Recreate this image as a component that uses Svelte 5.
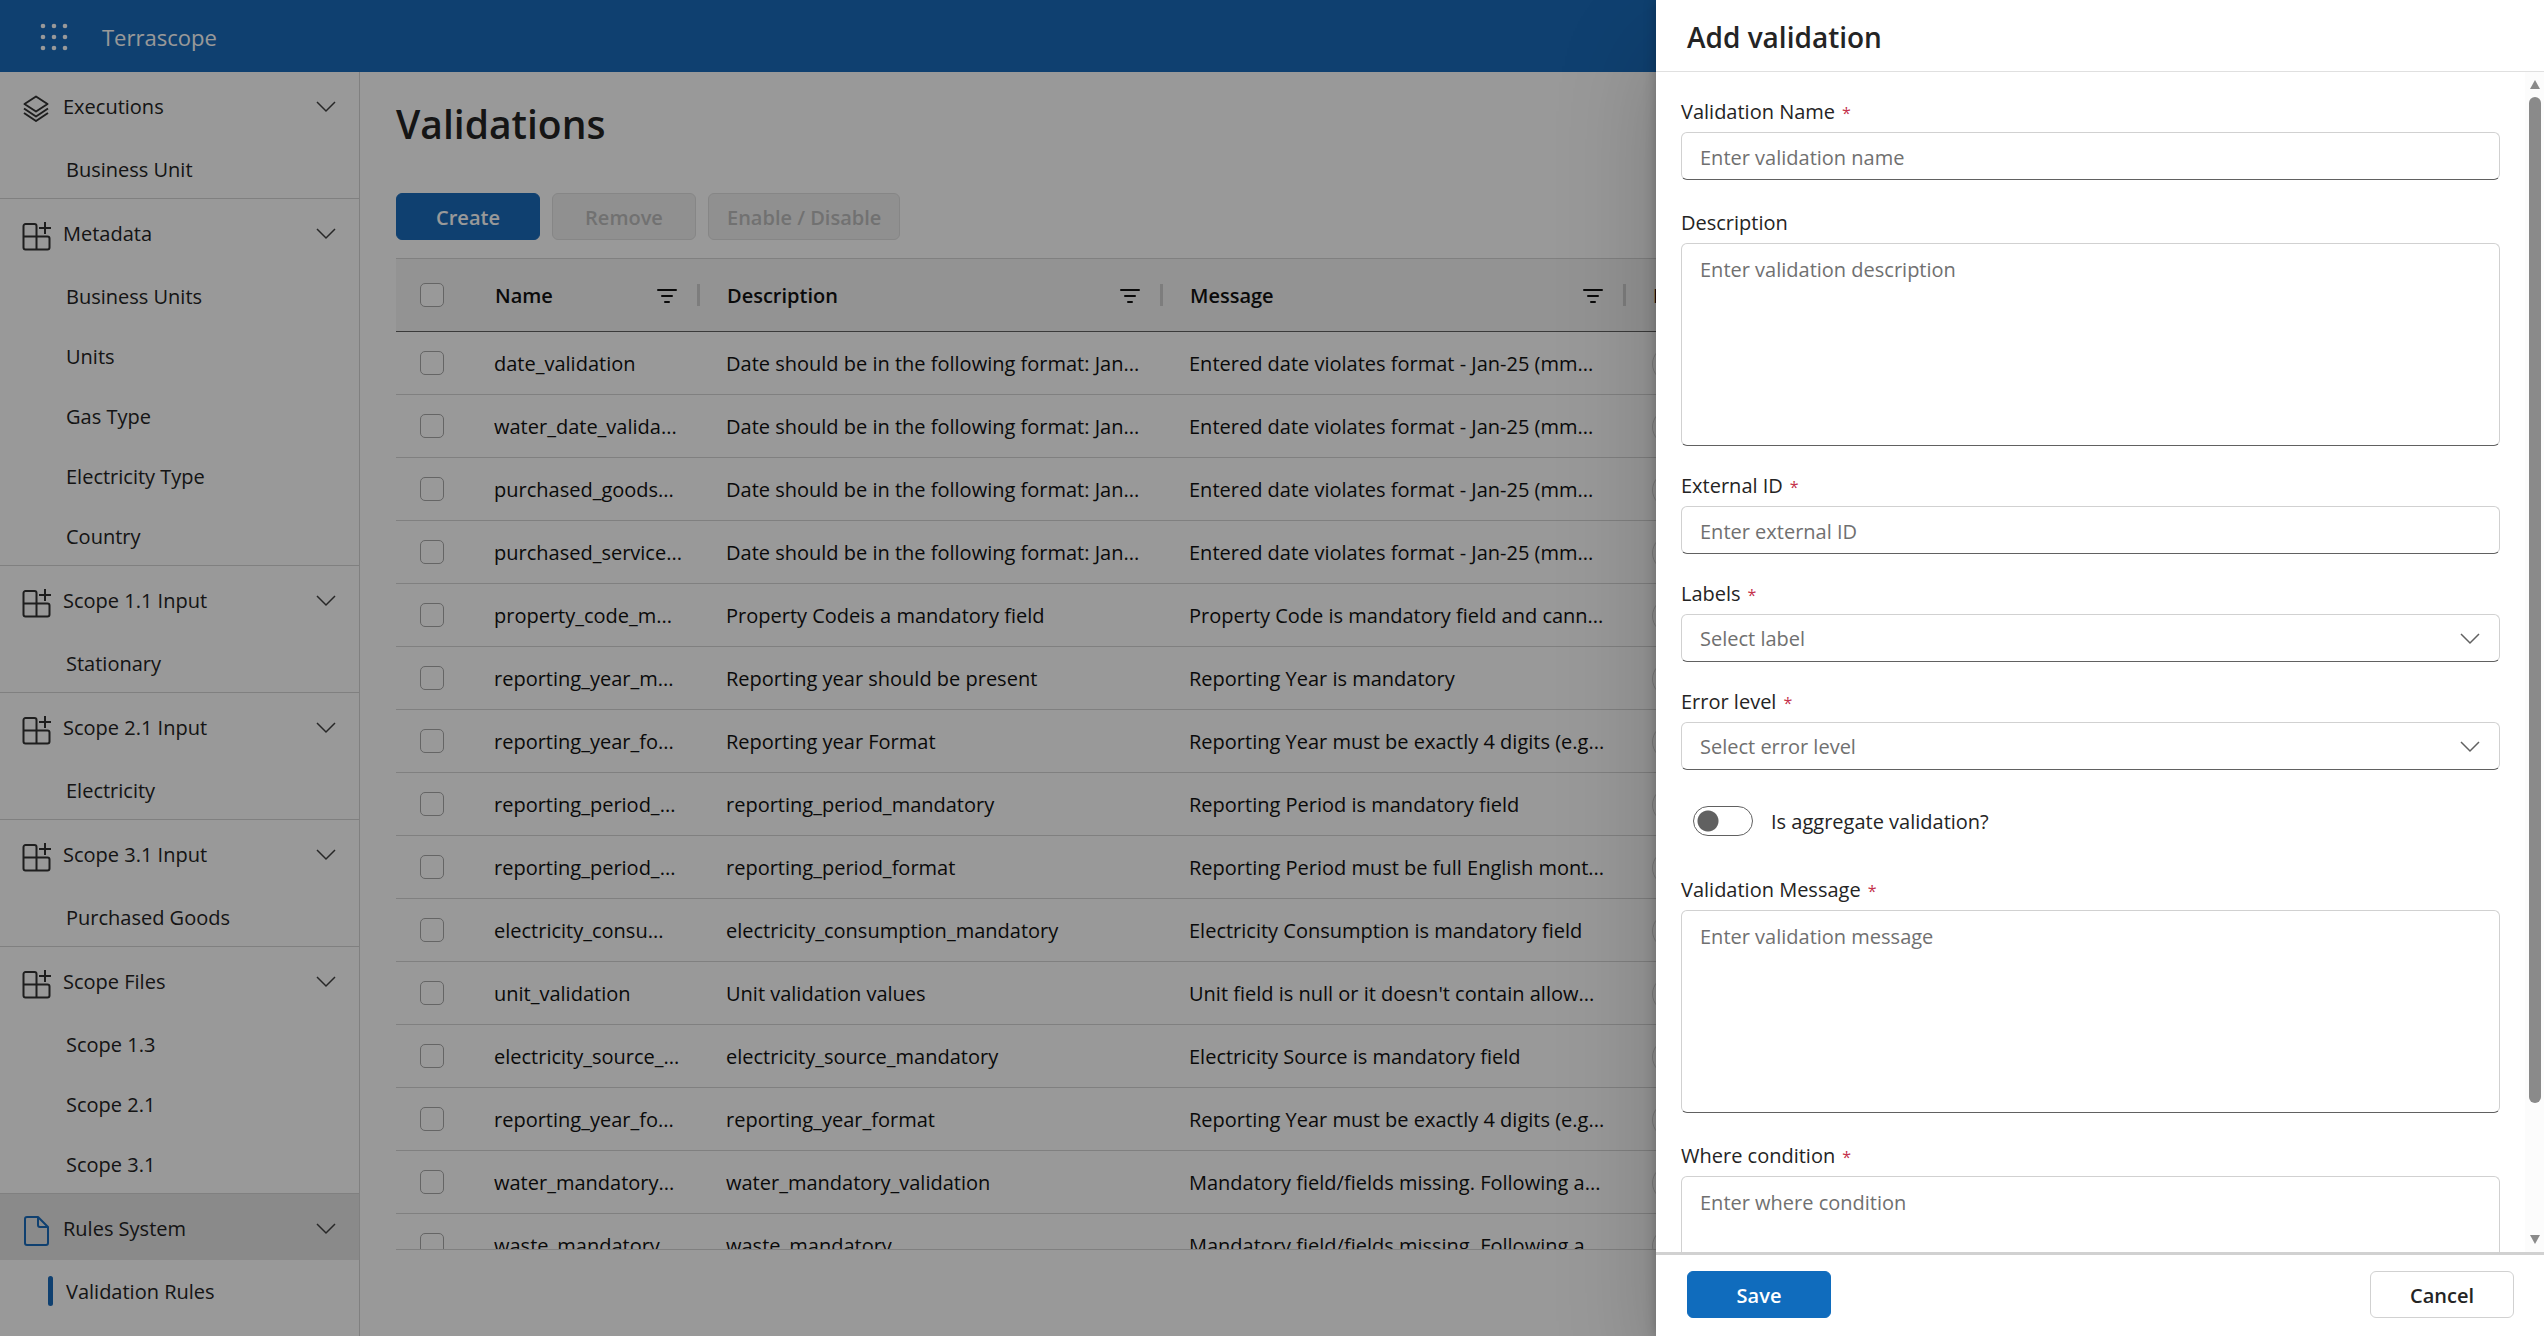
<script lang="ts">
  const groups = [
    { title: 'Executions', icon: 'layers', items: ['Business Unit'] },
    { title: 'Metadata', icon: 'apps', items: ['Business Units', 'Units', 'Gas Type', 'Electricity Type', 'Country'] },
    { title: 'Scope 1.1 Input', icon: 'apps', items: ['Stationary'] },
    { title: 'Scope 2.1 Input', icon: 'apps', items: ['Electricity'] },
    { title: 'Scope 3.1 Input', icon: 'apps', items: ['Purchased Goods'] },
    { title: 'Scope Files', icon: 'apps', items: ['Scope 1.3', 'Scope 2.1', 'Scope 3.1'] },
    { title: 'Rules System', icon: 'doc', items: ['Validation Rules'] },
  ];
  const activeGroup = 'Rules System';
  const activeItem = 'Validation Rules';

  const dateText = 'Date should be in the following format: Jan...';
  const dateMessage = 'Entered date violates format - Jan-25 (mm...';
  const rows = [
    ['date_validation', dateText, dateMessage],
    ['water_date_valida...', dateText, dateMessage],
    ['purchased_goods...', dateText, dateMessage],
    ['purchased_service...', dateText, dateMessage],
    ['property_code_m...', 'Property Codeis a mandatory field', 'Property Code is mandatory field and cann...'],
    ['reporting_year_m...', 'Reporting year should be present', 'Reporting Year is mandatory'],
    ['reporting_year_fo...', 'Reporting year Format', 'Reporting Year must be exactly 4 digits (e.g...'],
    ['reporting_period_...', 'reporting_period_mandatory', 'Reporting Period is mandatory field'],
    ['reporting_period_...', 'reporting_period_format', 'Reporting Period must be full English mont...'],
    ['electricity_consu...', 'electricity_consumption_mandatory', 'Electricity Consumption is mandatory field'],
    ['unit_validation', 'Unit validation values', "Unit field is null or it doesn't contain allow..."],
    ['electricity_source_...', 'electricity_source_mandatory', 'Electricity Source is mandatory field'],
    ['reporting_year_fo...', 'reporting_year_format', 'Reporting Year must be exactly 4 digits (e.g...'],
    ['water_mandatory...', 'water_mandatory_validation', 'Mandatory field/fields missing. Following a...'],
    ['waste_mandatory', 'waste_mandatory', 'Mandatory field/fields missing. Following a...'],
  ];

  const fields = [
    { id: 'name', label: 'Validation Name', kind: 'input', hint: 'Enter validation name', required: true },
    { id: 'description', label: 'Description', kind: 'textarea', hint: 'Enter validation description', required: false },
    { id: 'external', label: 'External ID', kind: 'input', hint: 'Enter external ID', required: true },
    { id: 'labels', label: 'Labels', kind: 'select', hint: 'Select label', required: true },
    { id: 'level', label: 'Error level', kind: 'select', hint: 'Select error level', required: true },
    { id: 'aggregate', label: 'Is aggregate validation?', kind: 'switch', hint: '', required: false },
    { id: 'message', label: 'Validation Message', kind: 'textarea', hint: 'Enter validation message', required: true },
    { id: 'where', label: 'Where condition', kind: 'textarea', hint: 'Enter where condition', required: true },
  ];
</script>

{#snippet chevron()}
  <svg class="chevron" viewBox="0 0 20 12" aria-hidden="true"><path d="M1 1l9 9 9-9" /></svg>
{/snippet}

{#snippet filterIcon()}
  <svg class="filter" viewBox="0 0 22 16" aria-hidden="true"><path d="M2 2h18M6 8h10M9 14h4" /></svg>
{/snippet}

<div class="app">
  <header class="topbar">
    <button class="launcher" aria-label="App launcher">
      <svg viewBox="0 0 28 28" aria-hidden="true">
        {#each [3, 14, 25] as y}
          {#each [3, 14, 25] as x}
            <circle cx={x} cy={y} r="2.3" />
          {/each}
        {/each}
      </svg>
    </button>
    <span class="brand">Terrascope</span>
  </header>

  <div class="body">
    <nav class="sidebar">
      {#each groups as group}
        <section class="group">
          <button class="group-head" class:active={group.title === activeGroup}>
            {#if group.icon === 'layers'}
              <svg class="nav-icon" viewBox="0 0 30 30" aria-hidden="true">
                <path d="M15 2.500l11.500 7.500L15 17.500 3.500 10z" />
                <path d="M3 14.500l12 8 12-8M3 19l12 8 12-8" />
              </svg>
            {:else if group.icon === 'apps'}
              <svg class="nav-icon" viewBox="0 0 30 30" aria-hidden="true">
                <path d="M15.500 15.500V5a2 2 0 0 0-2-2h-9a2 2 0 0 0-2 2v21.500a2 2 0 0 0 2 2h22a2 2 0 0 0 2-2v-9a2 2 0 0 0-2-2h-24M15.500 15.500v13M24 1v12M18 7h12" />
              </svg>
            {:else}
              <svg class="nav-icon blue" viewBox="0 0 30 30" aria-hidden="true">
                <path d="M17 1H6a2 2 0 0 0-2 2v24a2 2 0 0 0 2 2h19a2 2 0 0 0 2-2V11zM17 1v8a2 2 0 0 0 2 2h8" />
              </svg>
            {/if}
            <span>{group.title}</span>
            {@render chevron()}
          </button>
          {#each group.items as item}
            <a class="item" class:current={item === activeItem} href="#top">{item}</a>
          {/each}
        </section>
      {/each}
    </nav>

    <main>
      <h1>Validations</h1>
      <div class="toolbar">
        <button class="btn primary">Create</button>
        <button class="btn" disabled>Remove</button>
        <button class="btn" disabled>Enable / Disable</button>
      </div>
      <div class="grid">
        <table>
          <colgroup><col class="c-check" /><col class="c-name" /><col class="c-text" /><col class="c-text" /><col /></colgroup>
          <thead>
            <tr>
              <th><input type="checkbox" aria-label="Select all" /></th>
              {#each ['Name', 'Description', 'Message'] as title}
                <th><div class="th"><span>{title}</span>{@render filterIcon()}</div></th>
              {/each}
              <th><div class="th"><span>Level</span></div></th>
            </tr>
          </thead>
          <tbody>
            {#each rows as row}
              <tr>
                <td><input type="checkbox" aria-label="Select {row[0]}" /></td>
                {#each row as cell}
                  <td>{cell}</td>
                {/each}
                <td><span class="pill"></span></td>
              </tr>
            {/each}
          </tbody>
        </table>
      </div>
    </main>
  </div>

  <div class="overlay"></div>

  <div class="drawer" role="dialog" aria-labelledby="drawer-title">
    <h2 id="drawer-title">Add validation</h2>
    <div class="drawer-body">
      <form>
        {#each fields as field}
          {#if field.kind === 'switch'}
            <div class="switch">
              <input type="checkbox" role="switch" aria-checked="false" id={field.id} />
              <label for={field.id}>{field.label}</label>
            </div>
          {:else}
            <div class="field {field.kind}">
              <label for={field.id}>{field.label}{#if field.required}<span class="req">*</span>{/if}</label>
              {#if field.kind === 'input'}
                <input type="text" id={field.id} placeholder={field.hint} />
              {:else if field.kind === 'textarea'}
                <textarea id={field.id} placeholder={field.hint}></textarea>
              {:else}
                <div class="select-wrap">
                  <select id={field.id}><option>{field.hint}</option></select>
                  {@render chevron()}
                </div>
              {/if}
            </div>
          {/if}
        {/each}
      </form>
      <div class="scrollbar" aria-hidden="true">
        <svg viewBox="0 0 10 9"><path d="M5 0l5 9H0z" /></svg>
        <div class="track"><div class="thumb"></div></div>
        <svg viewBox="0 0 10 9"><path d="M0 0h10L5 9z" /></svg>
      </div>
    </div>
    <footer>
      <button class="btn primary">Save</button>
      <button class="btn">Cancel</button>
    </footer>
  </div>
</div>

<style>
  :global(body) { margin: 0; }
  .app { position: relative; display: flex; flex-direction: column; height: 100vh; overflow: hidden; background: #fff; color: #242424; font: 20px/28px "Segoe UI", "Open Sans", "Noto Sans", sans-serif; }
  .app * { box-sizing: border-box; }
  button, input, textarea, select { font: inherit; color: inherit; margin: 0; }
  svg { flex: none; }

  .topbar { display: flex; align-items: center; gap: 34px; height: 72px; flex: none; padding: 2px 40px 0; background: #1a6bbb; color: #fff; }
  .launcher { display: flex; padding: 0; border: 0; background: none; }
  .launcher svg { width: 28px; height: 28px; fill: #fff; }
  .brand { font-size: 22px; }

  .body { display: flex; flex: 1; min-height: 0; }
  .sidebar { width: 360px; flex: none; overflow: hidden; border-right: 1px solid #d6d6d6; }
  .group { border-bottom: 1px solid #d6d6d6; }
  .group:last-child { border-bottom: 0; }
  .group-head { display: flex; align-items: center; gap: 12px; width: 100%; height: 66px; padding: 4px 23px 0 21px; border: 0; background: none; text-align: left; }
  .group-head.active { background: #e6e6e6; }
  .group-head span { flex: 1; }
  .nav-icon { width: 30px; height: 30px; margin-top: 4px; fill: none; stroke: #333; stroke-width: 2; stroke-linejoin: round; }
  .nav-icon.blue { stroke: #1a6bbb; }
  .chevron { width: 20px; height: 12px; fill: none; stroke: #424242; stroke-width: 1.5; }
  .item { position: relative; display: flex; align-items: center; height: 60px; padding: 4px 0 0 66px; color: inherit; text-decoration: none; }
  .item.current::before { content: ''; position: absolute; left: 48px; top: 16px; width: 5px; height: 30px; border-radius: 3px; background: #1a6bbb; }

  main { display: flex; flex: 1; flex-direction: column; min-width: 0; padding: 24px 36px 86px; }
  h1 { margin: 0 0 41px; font-size: 39px; line-height: 56px; font-weight: 600; }
  .toolbar { display: flex; gap: 12px; margin-bottom: 18px; }
  .btn { min-width: 144px; height: 47px; padding: 2px 18px 0; border: 1px solid #d1d1d1; border-radius: 6px; background: #fff; font-weight: 600; }
  .btn:disabled { background: #f0f0f0; border-color: #e0e0e0; color: #bdbdbd; }
  .btn.primary { background: #106cbd; border-color: #106cbd; color: #fff; }
  .toolbar .primary { background: #1a6bbb; border-color: #1a6bbb; }

  .grid { flex: 1; min-height: 0; overflow: hidden; border-top: 1px solid #d6d6d6; border-bottom: 1px solid #d6d6d6; }
  table { width: 100%; border-collapse: separate; border-spacing: 0; table-layout: fixed; color: #111; }
  .c-check { width: 72px; }
  .c-name { width: 232px; }
  .c-text { width: 463px; }
  th { position: relative; height: 73px; padding: 0 22px 0 27px; border-bottom: 1px solid #616161; background: #f5f5f5; text-align: left; font-weight: 600; }
  th:nth-child(n + 2):nth-child(-n + 4)::after { content: ''; position: absolute; right: 0; top: 25px; width: 3px; height: 22px; background: #d1d1d1; }
  .th { display: flex; align-items: center; justify-content: space-between; padding-top: 2px; }
  .filter { width: 22px; height: 16px; fill: none; stroke: #111; stroke-width: 2; stroke-linecap: round; }
  td { height: 63px; padding: 2px 0 0 26px; border-bottom: 1px solid #d6d6d6; white-space: nowrap; overflow: hidden; }
  th:first-child, td:first-child { padding: 0 24px; }
  th input, td input { display: block; width: 24px; height: 24px; appearance: none; border: 1px solid #a8a8a8; border-radius: 5px; background: #fff; }
  .pill { display: block; width: 120px; height: 36px; border: 1px solid #d6d6d6; border-radius: 18px; }

  .overlay { position: absolute; inset: 0; background: rgba(0, 0, 0, 0.4); }
  .drawer { position: absolute; inset: 0 0 0 auto; display: flex; flex-direction: column; width: 888px; background: #fff; box-shadow: 0 0 12px rgba(0, 0, 0, 0.24), 0 48px 96px rgba(0, 0, 0, 0.2); }
  h2 { height: 72px; flex: none; margin: 0; padding: 3px 31px 0; border-bottom: 1px solid #e0e0e0; font-size: 28px; line-height: 68px; font-weight: 600; }
  .drawer-body { display: flex; flex: 1; min-height: 0; }
  form { flex: 1; overflow: hidden; padding: 26px 25px 0; }
  .field { display: flex; flex-direction: column; gap: 6px; margin-bottom: 26px; }
  .field.input:first-child, .switch + .field { margin-bottom: 29px; }
  .req { margin-left: 7px; color: #c4314b; font-size: 16px; line-height: 20px; }
  .field input, textarea, select { display: block; width: 100%; height: 48px; padding: 2px 18px 0; border: 1px solid #d1d1d1; border-bottom-color: #616161; border-radius: 6px; background: #fff; }
  textarea { height: 203px; padding-top: 12px; resize: none; }
  .field ::placeholder { color: #707070; opacity: 1; }
  .select-wrap { position: relative; }
  select { appearance: none; color: #707070; }
  .select-wrap .chevron { position: absolute; right: 20px; top: 19px; stroke: #616161; }
  .switch { display: flex; align-items: center; gap: 18px; height: 50px; margin: 0 12px 30px; }
  .switch label { padding-top: 2px; }
  .switch input { width: 60px; height: 30px; appearance: none; border: 1px solid #616161; border-radius: 15px; background: radial-gradient(circle at 14px 14px, #616161 10px, transparent 11px); }
  .scrollbar { display: flex; flex-direction: column; align-items: center; gap: 8px; width: 19px; padding: 8px 0; background: #fcfcfc; }
  .scrollbar svg { width: 10px; height: 9px; fill: #8a8a8a; }
  .track { flex: 1; width: 12px; }
  .thumb { height: 89%; border-radius: 6px; background: #8a8a8a; }
  footer { display: flex; justify-content: space-between; height: 84px; flex: none; padding: 16px 30px 0 31px; border-top: 3px solid #d1d1d1; background: #fff; }
</style>
